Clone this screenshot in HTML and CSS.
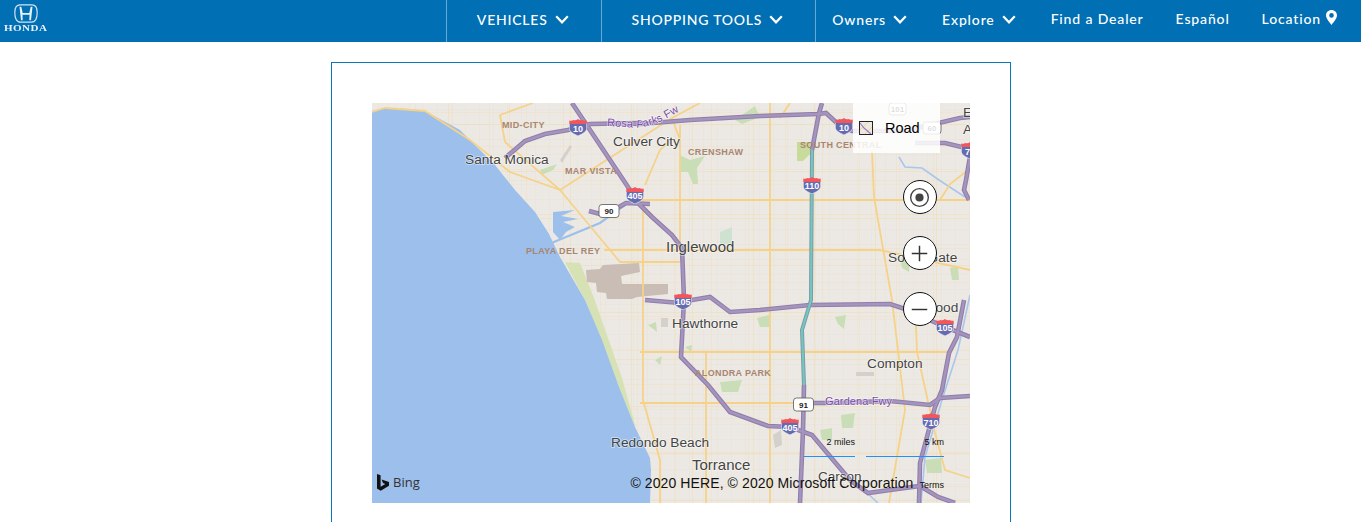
FILE: index.html
```html
<!DOCTYPE html>
<html lang="en">
<head>
<meta charset="utf-8">
<title>Find a Dealer</title>
<link rel="stylesheet" href="styles.css">
</head>
<body>
<header class="topbar">
  <a class="brand" href="#">
    <svg class="brand-mark" viewBox="0 0 24 19" width="24" height="19" aria-hidden="true">
      <path class="mark-frame" d="M6 .8H18C21.2.8 23.2 3.2 23.2 8.5 23.2 14 21.5 18.2 17.5 18.2H6.500C2.500 18.200.8 14 .8 8.500.8 3.200 2.800.8 6 .8Z"/>
      <path class="mark-h" d="M5.500 2.800H7.300L8.700 8.900H15.300L16.700 2.800H18.500L17 16.200H15.300L15.500 10.800H8.500L8.700 16.200H7Z"/>
    </svg>
    <span class="brand-name">HONDA</span>
  </a>
  <nav class="nav">
    <a class="nav-item nav-main" href="#">VEHICLES<svg class="chev" viewBox="0 0 14 9"><path d="M1.2 1.2 7 7.3 12.8 1.2"/></svg></a>
    <a class="nav-item nav-main" href="#">SHOPPING TOOLS<svg class="chev" viewBox="0 0 14 9"><path d="M1.2 1.2 7 7.3 12.8 1.2"/></svg></a>
    <div class="nav-secondary">
      <a class="nav-item nav-low" href="#">Owners<svg class="chev" viewBox="0 0 14 9"><path d="M1.2 1.2 7 7.3 12.8 1.2"/></svg></a>
      <a class="nav-item nav-low" href="#">Explore<svg class="chev" viewBox="0 0 14 9"><path d="M1.2 1.2 7 7.3 12.8 1.2"/></svg></a>
      <a class="nav-item" href="#">Find a Dealer</a>
      <a class="nav-item" href="#">Español</a>
      <a class="nav-item" href="#">Location<svg class="pin" viewBox="0 0 11 15"><path fill-rule="evenodd" d="M5.500 0C8.600 0 11 2.300 11 5.300 11 8.600 7.600 12.200 5.500 15 3.400 12.200 0 8.600 0 5.300 0 2.300 2.400 0 5.500 0ZM5.500 3.100A2.300 2.300 0 1 0 5.500 7.700 2.300 2.300 0 1 0 5.500 3.100Z"/></svg></a>
    </div>
  </nav>
</header>

<main class="page">
  <section class="panel">
    <div class="map">
      <svg class="map-canvas" viewBox="372 103 598 400" width="598" height="400" role="img" aria-label="Map of Los Angeles">
        <defs>
          <pattern id="gridC" width="14" height="15" patternUnits="userSpaceOnUse" x="3" y="4">
            <path class="grid-line3" d="M0 0H14M0 0V15"/>
          </pattern>
          <pattern id="gridA" width="37" height="34" patternUnits="userSpaceOnUse" x="8" y="10">
            <path class="grid-line" d="M0 0H37M0 0V34"/>
          </pattern>
          <pattern id="gridB" width="61" height="47" patternUnits="userSpaceOnUse" x="21" y="30">
            <path class="grid-line2" d="M0 0H61M0 0V47"/>
          </pattern>
          <symbol id="shield" viewBox="0 0 18 17">
            <path class="sh-blue" d="M.3 4H17.700V9.500C17.700 13 13 15 9 17 5 15 .3 13 .3 9.500Z"/>
            <path class="sh-red" d="M.3 5V1.600C2 2 3.500 1.800 4.600 1 6 1.500 7.500 1.200 9 0 10.500 1.200 12 1.500 13.400 1 14.500 1.800 16 2 17.700 1.600V5Z"/>
          </symbol>
          <path id="i10a" d="M505 158 525 141 545 134 568 130 590 124 640 123"/>
          <path id="i10b" d="M608 123 640 124 690 120 760 116 818 114 826 113 838 124 852 131 905 131 930 125 960 118 970 117"/>
          <path id="i10c" d="M915 143 945 143 970 149"/>
          <path id="i405" d="M572 103 628 187 640 205 652 217 672 235 682 248 684 300 681 357 708 385 730 412 768 426 790 427 812 435 850 480 868 493 890 490 920 486 938 497 955 503"/>
          <path id="i105" d="M645 300 680 303 692 300 710 297 730 312 760 310 810 305 890 304 905 309 945 327 970 337"/>
          <path id="i110s" d="M804 385 803 430 800 503"/>
          <path id="i110top" d="M822 103 819 113 812 150"/>
          <path id="i110n" d="M812 150 811 300 802 330 804 385"/>
          <path id="sr91" d="M803 403 825 403 890 401 930 405 940 398 970 396"/>
          <path id="i710" d="M970 157 966 180 964 190 969 200M964 300 957 337 949 353 942 390 935 407 920 463 919 503"/>
          <path id="sr90" d="M589 211 600 214M619 207 626 203 650 204"/>
        </defs>

        <g class="map-base">
          <rect class="land" x="372" y="103" width="598" height="400"/>
          <rect x="372" y="103" width="598" height="400" fill="url(#gridC)"/>
          <rect x="372" y="103" width="598" height="400" fill="url(#gridA)"/>
          <rect x="372" y="103" width="598" height="400" fill="url(#gridB)"/>

          <path class="park" d="M540 170 557 164 553 170 542 175Z"/>
          <path class="park" d="M680 155 690 160 705 156 697 168 698 184 693 184 688 172 681 172Z"/>
          <path class="park-strong" d="M797 142H810V154L803 161H797Z"/>
          <path class="park-blue" d="M720 232 732 227V244H720Z"/>
          <path class="park" d="M757 318 769 315V327H760Z"/>
          <path class="park" d="M835 317 846 315 844 329 838 324Z"/>
          <path class="park" d="M720 382 742 380 738 392H722Z"/>
          <path class="park" d="M841 415 855 413 853 428H842Z"/>
          <path class="park" d="M820 430 832 428 832 440H822Z"/>
          <path class="park" d="M925 460 941 458 942 473H927Z"/>
          <path class="park" d="M735 120 755 106 760 117 742 124Z"/>
          <path class="park" d="M900 260 910 253 909 272 902 268Z"/>
          <path class="park" d="M950 268 958 266 959 280H952Z"/>
          <path class="park" d="M655 360 662 356 660 365Z"/>
          <path class="park" d="M648 325 656 322 657 332Z"/>
          <path class="park" d="M685 347 692 345 691 352Z"/>
          <path class="park-strip" d="M565 262 580 263 594 298 622 378 636 428 632 420 612 370 586 302Z"/>
          <path class="pale-grey" d="M560 160 570 145 572 147 562 163Z"/>
          <path class="pale-grey" d="M661 318H668V327H661Z"/>
          <path class="pale-grey" d="M856 372H874V376H856Z"/>
          <path class="pale-grey" d="M773 435 781 430 782 445 775 448Z"/>
          <path class="airport" d="M586 270 600 269 603 265 639 263 640 272 621 276 622 284 668 284 668 294 637 297 632 299 607 299 606 293 597 292 596 283 587 282Z"/>

          <path class="water" d="M372 111 385 108 410 109 425 111 460 130 495 165 515 190 535 212 549 234 560 257 585 300 602 340 619 387 635 427 650 458 651 470 650 503H372Z"/>
          <path class="water" d="M553 212 575 210 561 216 578 219 563 222 575 227 566 232 560 240 553 232 553 225Z"/>
          <path class="water-line" d="M549 244 600 223 625 205"/>
          <path class="river" d="M899 157 905 167 922 168 939 180 965 197M970 295 958 350 942 400 925 457 921 503M867 493 878 503"/>

          <g class="arterial">
            <path d="M372 112 385 108 425 111 470 140 510 172 560 190 600 238 620 262 640 262H680"/>
            <path d="M505 142 560 190"/>
            <path d="M533 103 500 115 505 142"/>
            <path d="M560 190 622 150 672 118 700 103"/>
            <path d="M645 185 660 150 672 138"/>
            <path d="M643 200V400L660 460V503"/>
            <path d="M640 200H970"/>
            <path d="M604 250H880L970 270"/>
            <path d="M640 352H950"/>
            <path d="M640 403H800"/>
            <path d="M680 125V250"/>
            <path d="M770 103V503"/>
            <path d="M706 352V503"/>
            <path d="M672 118 680 140"/>
            <path d="M872 150 874 197 892 300 905 410 889 503"/>
            <path d="M915 300 917 352 935 433 945 470 970 478"/>
            <path d="M790 103 780 118"/>
            <path d="M940 200 950 184 968 170"/>
          </g>

          <g class="fw-case">
            <use href="#i10a"/><use href="#i10b"/><use href="#i10c"/><use href="#i405"/><use href="#i105"/><use href="#i110top"/><use href="#i110s"/><use href="#sr91"/><use href="#i710"/><use href="#sr90"/>
          </g>
          <g class="fw-fill">
            <use href="#i10a"/><use href="#i10b"/><use href="#i10c"/><use href="#i405"/><use href="#i105"/><use href="#i110top"/><use href="#i110s"/><use href="#sr91"/><use href="#i710"/><use href="#sr90"/>
          </g>
          <use class="teal-case" href="#i110n"/>
          <use class="teal-fill" href="#i110n"/>
        </g>

        <g class="labels-district">
          <text x="502" y="128">MID-CITY</text>
          <text x="688" y="155">CRENSHAW</text>
          <text x="565" y="174">MAR VISTA</text>
          <text x="800" y="148">SOUTH CENTRAL</text>
          <text x="526" y="254">PLAYA DEL REY</text>
          <text x="695" y="376">ALONDRA PARK</text>
        </g>

        <g class="labels-city">
          <text x="465" y="164">Santa Monica</text>
          <text x="613" y="146">Culver City</text>
          <text x="672" y="328">Hawthorne</text>
          <text x="867" y="368">Compton</text>
          <text x="611" y="447">Redondo Beach</text>
          <text x="888" y="262">South Gate</text>
          <text x="904" y="312">Lynwood</text>
          <text x="963" y="117">E</text>
          <text x="963" y="134">A</text>
        </g>
        <g class="labels-large">
          <text x="666" y="252">Inglewood</text>
          <text x="692" y="470">Torrance</text>
          <text class="label-carson" x="818" y="481">Carson</text>
        </g>

        <path id="rosaCurve" class="no-stroke" d="M607 126 640 128 660 122 678 112"/>
        <text class="label-fwy"><textPath href="#rosaCurve">Rosa Parks Fwy</textPath></text>
        <text class="label-fwy" x="825" y="405">Gardena Fwy</text>

        <use href="#shield" x="569" y="119" width="18" height="17"/>
        <use href="#shield" x="835" y="118" width="18" height="17"/>
        <use href="#shield" x="626" y="187" width="18" height="17"/>
        <use href="#shield" x="803" y="177" width="18" height="17"/>
        <use href="#shield" x="674" y="293" width="18" height="17"/>
        <use href="#shield" x="936" y="319" width="18" height="17"/>
        <use href="#shield" x="781" y="418" width="18" height="17"/>
        <use href="#shield" x="922" y="413" width="18" height="17"/>
        <use href="#shield" x="961" y="142" width="18" height="17"/>
        <g class="shield-text">
          <text x="578" y="132">10</text>
          <text x="844" y="131">10</text>
          <text x="635" y="199">405</text>
          <text x="812" y="189">110</text>
          <text x="683" y="305">105</text>
          <text x="945" y="331">105</text>
          <text x="790" y="431">405</text>
          <text x="931" y="426">710</text>
          <text x="970" y="155">71</text>
        </g>

        <g class="state-shield">
          <rect x="599" y="204.500" width="20" height="13" rx="3"/>
          <rect x="793.500" y="398" width="20" height="13" rx="3"/>
          <rect x="889" y="103" width="17" height="12" rx="3"/>
          <rect x="923" y="122" width="18" height="12" rx="3"/>
        </g>
        <g class="state-text">
          <text x="609" y="214">90</text>
          <text x="803.500" y="407.500">91</text>
          <text x="897.500" y="112">101</text>
          <text x="932" y="131">60</text>
        </g>
      </svg>

      <div class="map-type">
        <svg class="map-type-icon" viewBox="0 0 14 14" width="14" height="14" aria-hidden="true">
          <rect class="mti-bg" x=".5" y=".5" width="13" height="13"/>
          <path class="mti-yellow" d="M1 9 9 1M6 13 13 6"/>
          <path class="mti-purple" d="M1 2 5 7 12 13"/>
          <rect class="mti-frame" x=".5" y=".5" width="13" height="13"/>
        </svg>
        <span>Road</span>
      </div>

      <div class="map-controls">
        <button class="map-btn" type="button" aria-label="Locate me">
          <svg viewBox="0 0 34 34"><circle class="ic-ring" cx="17" cy="17" r="9.700"/><circle class="ic-dot" cx="17" cy="17" r="4.500"/></svg>
        </button>
        <button class="map-btn" type="button" aria-label="Zoom in">
          <svg viewBox="0 0 34 34"><path class="ic-line" d="M8.500 17H25.500M17 8.500V25.500"/></svg>
        </button>
        <button class="map-btn" type="button" aria-label="Zoom out">
          <svg viewBox="0 0 34 34"><path class="ic-line" d="M8.500 17H25.500"/></svg>
        </button>
      </div>

      <div class="map-foot">
        <div class="bing">
          <svg viewBox="0 0 12 17" width="12" height="17" aria-hidden="true"><path d="M0 0 3.600 1.300V12.700L8.300 10 6 8.900 4.600 5.500 12 8.100V11.800L3.700 16.700 0 14.600Z"/></svg>
          <span>Bing</span>
        </div>
        <div class="attrib">
          <span class="copyright">© 2020 HERE, © 2020 Microsoft Corporation</span>
          <span class="terms">Terms</span>
        </div>
      </div>

      <div class="scale">
        <div class="scale-item scale-mi"><span>2 miles</span></div>
        <div class="scale-item scale-km"><span>5 km</span></div>
      </div>
    </div>
  </section>
</main>
</body>
</html>
```

FILE: styles.css
```css
* { box-sizing: border-box; }

html, body {
  margin: 0;
  height: 100%;
  overflow: hidden;
  background: #fff;
}

a { color: inherit; text-decoration: none; }

/* top bar */
.topbar {
  height: 42px;
  background: #006fb4;
  color: #fff;
  display: flex;
  justify-content: space-between;
  font-family: Lato, "Open Sans", sans-serif;
}

.brand {
  width: 52px;
  padding: 4px 0 0 4px;
  display: flex;
  flex-direction: column;
  align-items: flex-start;
}

.brand-mark { margin-left: 10px; display: block; }
.mark-frame { fill: none; stroke: #cfe5f2; stroke-width: 1.2; }
.mark-h { fill: #e6f2f9; }

.brand-name {
  font: bold 8.5px/8px "Liberation Serif", serif;
  letter-spacing: .35px;
  color: #e8f2f8;
  margin-top: 1px;
  transform: scaleX(1.3);
  transform-origin: left;
}

.nav { display: flex; height: 42px; }

.nav-item {
  display: flex;
  align-items: center;
  font-size: 14px;
  font-weight: 500;
  letter-spacing: .85px;
  white-space: nowrap;
}

.nav-main {
  border-left: 1px solid #66a9d2;
  padding: 0 32px 4px 30px;
  font-size: 14px;
  letter-spacing: .78px;
}

.nav-low { padding-top: 2px; }

.nav-secondary {
  display: flex;
  gap: 32px;
  padding: 0 24px 5px 16px;
  border-left: 1px solid #66a9d2;
}

.nav-low + .nav-low { margin-left: 3px; }
.nav-low + .nav-item:not(.nav-low) { margin-left: 3px; }

.chev {
  width: 14px;
  height: 9px;
  margin-left: 7px;
  fill: none;
  stroke: #fff;
  stroke-width: 2.2;
}

.pin {
  width: 11px;
  height: 15px;
  margin: -3px 0 0 5px;
  fill: #fff;
}

/* page */
.page { display: flex; padding: 20px 0 0 331px; }

.panel {
  width: 680px;
  height: 600px;
  flex: none;
  padding: 40px;
  border: 1px solid #0a77b8;
}

/* map */
.map {
  position: relative;
  width: 598px;
  height: 400px;
  overflow: hidden;
  font-family: "Liberation Sans", Arial, sans-serif;
}

.map-canvas { display: block; }
.map-base { filter: blur(.35px); }

.land { fill: #ece9e4; }
.grid-line3 { fill: none; stroke: #e8e1d2; stroke-width: .8; }
.grid-line { fill: none; stroke: #efe0bd; stroke-width: 1; }
.grid-line2 { fill: none; stroke: #efdcae; stroke-width: 1; }
.water { fill: #9dbfec; }
.water-line { fill: none; stroke: #9dbfec; stroke-width: 2.2; }
.river { fill: none; stroke: #a8c6ee; stroke-width: 1.6; }
.park { fill: #c9deb6; }
.park-strong { fill: #c9db9b; }
.park-blue { fill: #cfe2d2; }
.park-strip { fill: #d6e2b4; }
.pale-grey { fill: #d4d0ca; }
.airport { fill: #c9bdb5; }

.arterial path { fill: none; stroke: #f6d288; stroke-width: 1.8; }

.fw-case use { fill: none; stroke: #8f7eaa; stroke-width: 4.6; }
.fw-fill use { fill: none; stroke: #a594bd; stroke-width: 2.4; }
.teal-case { fill: none; stroke: #7a9cab; stroke-width: 4; }
.teal-fill { fill: none; stroke: #74c7bd; stroke-width: 2; }

.labels-district text {
  font-size: 9px;
  font-weight: bold;
  letter-spacing: .35px;
  fill: #a88570;
}

.labels-city text {
  font-size: 13.7px;
  fill: #444;
  paint-order: stroke;
  stroke: rgba(255, 255, 255, .55);
  stroke-width: 1.6px;
}

.labels-large text {
  font-size: 15px;
  fill: #444;
  paint-order: stroke;
  stroke: rgba(255, 255, 255, .55);
  stroke-width: 1.6px;
}

.labels-large .label-carson { font-size: 13.5px; }

.no-stroke { fill: none; stroke: none; }

.label-fwy {
  font-size: 11px;
  fill: #7a4ba6;
  letter-spacing: .1px;
  paint-order: stroke;
  stroke: rgba(255, 255, 255, .6);
  stroke-width: 1.4px;
}

.sh-blue { fill: #656bb0; stroke: #fff; stroke-width: .6; }
.sh-red { fill: #f0565c; }

.shield-text text {
  font-size: 9px;
  font-weight: bold;
  fill: #fff;
  text-anchor: middle;
}

.state-shield rect { fill: #fff; stroke: #555; stroke-width: .8; }
.state-text text {
  font-size: 8px;
  font-weight: bold;
  fill: #222;
  text-anchor: middle;
}

/* road selector */
.map-type {
  position: absolute;
  top: 0;
  left: 481px;
  width: 87px;
  height: 50px;
  padding-left: 6px;
  display: flex;
  align-items: center;
  gap: 12px;
  background: rgba(255, 255, 255, .85);
  font-size: 14.5px;
  color: #000;
}

.map-type-icon { flex: none; }
.mti-bg { fill: #ece9e4; }
.mti-yellow { fill: none; stroke: #f6d288; stroke-width: 1; }
.mti-purple { fill: none; stroke: #9d7fc4; stroke-width: 1.2; }
.mti-frame { fill: none; stroke: #222; stroke-width: 1; }

/* zoom controls */
.map-controls {
  position: absolute;
  top: 77px;
  left: 531px;
  display: flex;
  flex-direction: column;
  gap: 22px;
}

.map-btn {
  width: 34px;
  height: 34px;
  padding: 0;
  border: 1.5px solid #111;
  border-radius: 50%;
  background: #fff;
  display: block;
}

.map-btn svg { display: block; width: 31px; height: 31px; }
.ic-ring { fill: none; stroke: #444; stroke-width: 1.5; }
.ic-dot { fill: #444; }
.ic-line { fill: none; stroke: #333; stroke-width: 1.6; }

/* footer */
.map-foot {
  position: absolute;
  left: 5px;
  right: 26px;
  bottom: 12px;
  display: flex;
  justify-content: space-between;
  align-items: flex-end;
}

.bing { display: flex; align-items: center; gap: 4px; color: #333; font: 13px "Open Sans", sans-serif; line-height: 17px; }
.bing svg { fill: #111; display: block; }

.attrib { display: flex; align-items: baseline; gap: 6px; color: #111; white-space: nowrap; }
.copyright { font-size: 14px; letter-spacing: .1px; }
.terms { font-size: 9px; }

/* scale */
.scale {
  position: absolute;
  left: 432px;
  top: 334px;
  display: flex;
  gap: 11px;
  font-size: 9px;
  color: #111;
}

.scale-item {
  height: 20px;
  display: flex;
  justify-content: flex-end;
  border-bottom: 1.5px solid #1e90ff;
}

.scale-mi { width: 51px; }
.scale-km { width: 78px; }
```
